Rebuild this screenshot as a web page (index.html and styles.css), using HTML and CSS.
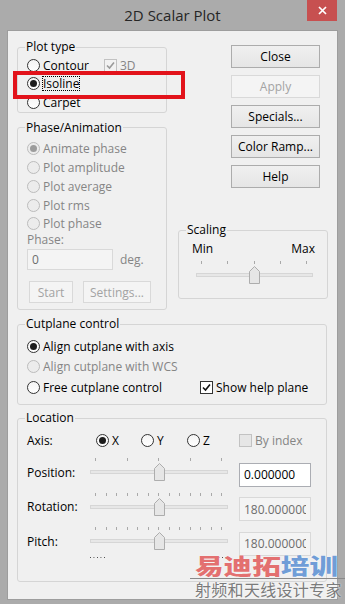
FILE: index.html
```html
<!DOCTYPE html>
<html lang="en">
  <head>
    <meta charset="UTF-8" />
    <meta name="viewport" content="width=device-width, initial-scale=1.0" />
    <title>2D Scalar Plot</title>
    <link rel="stylesheet" href="styles.css">
  </head>
  <body>
    <div class="window">
      <div class="titlebar">
        <span class="title">2D Scalar Plot</span>
        <div class="close-btn">
          <svg width="9" height="9" viewBox="0 0 9 9"><path d="M1 1L8 8M8 1L1 8" stroke="#fff" stroke-width="1.7"/></svg>
        </div>
      </div>

      <div class="client">
        <div class="top">
          <div class="left-col">
            <fieldset class="group plot-type">
              <legend>Plot type</legend>
              <div class="opt">
                <span class="radio"></span><span class="contour-label">Contour</span>
                <span class="check disabled"><svg width="9" height="9" viewBox="0 0 9 9"><path d="M1 4.5L3.5 7L8 1.5" fill="none" stroke="#9a9a9a" stroke-width="1.6"/></svg></span><span class="muted">3D</span>
              </div>
              <div class="opt"><span class="radio on"></span><span class="focus">Isoline</span></div>
              <div class="opt"><span class="radio"></span>Carpet</div>
            </fieldset>

            <fieldset class="group phase">
              <legend>Phase/Animation</legend>
              <div class="opt muted"><span class="radio on disabled"></span>Animate phase</div>
              <div class="opt muted"><span class="radio disabled"></span>Plot amplitude</div>
              <div class="opt muted"><span class="radio disabled"></span>Plot average</div>
              <div class="opt muted"><span class="radio disabled"></span>Plot rms</div>
              <div class="opt muted"><span class="radio disabled"></span>Plot phase</div>
              <div class="phase-label muted">Phase:</div>
              <div class="phase-input">
                <input class="field disabled" value="0" readonly />
                <span class="muted">deg.</span>
              </div>
              <div class="phase-buttons">
                <button class="btn disabled btn-start">Start</button>
                <button class="btn disabled btn-settings">Settings...</button>
              </div>
            </fieldset>
          </div>

          <div class="right-col">
            <button class="btn first">Close</button>
            <button class="btn disabled">Apply</button>
            <button class="btn">Specials...</button>
            <button class="btn">Color Ramp...</button>
            <button class="btn">Help</button>

            <fieldset class="group scaling">
              <legend>Scaling</legend>
              <div class="minmax"><span>Min</span><span>Max</span></div>
              <div class="slider">
                <div class="ticks"><i></i><i></i><i></i><i></i><i></i></div>
                <div class="track"></div>
                <svg class="thumb" style="left: calc((100% - 11px) * 0.5)" width="11" height="18" viewBox="0 0 11 18"><path d="M.5 17.5V5.5L5.5.5l5 5v12z" fill="#e6e6e6" stroke="#adadad"/></svg>
              </div>
            </fieldset>
          </div>
        </div>

        <fieldset class="group wide cutplane">
          <legend>Cutplane control</legend>
          <div class="opt"><span class="radio on"></span>Align cutplane with axis</div>
          <div class="opt muted"><span class="radio disabled"></span>Align cutplane with WCS</div>
          <div class="cut-row">
            <div class="opt free"><span class="radio"></span>Free cutplane control</div>
            <div class="opt">
              <span class="check"><svg width="9" height="9" viewBox="0 0 9 9"><path d="M1 4.5L3.5 7L8 1.5" fill="none" stroke="#111" stroke-width="1.6"/></svg></span>Show help plane
            </div>
          </div>
        </fieldset>

        <fieldset class="group wide location">
          <legend>Location</legend>
          <div class="axis-row">
            <span class="axis-label">Axis:</span>
            <div class="opt axis-x"><span class="radio on"></span>X</div>
            <div class="opt axis-y"><span class="radio"></span>Y</div>
            <div class="opt axis-z"><span class="radio"></span>Z</div>
            <div class="opt muted"><span class="check disabled empty"></span>By index</div>
          </div>

          <div class="slide-row">
            <span>Position:</span>
            <div class="slider">
              <div class="ticks"><i></i><i></i><i></i><i></i><i></i></div>
              <div class="track"></div>
              <svg class="thumb" style="left: calc((100% - 11px) * 0.5)" width="11" height="18" viewBox="0 0 11 18"><path d="M.5 17.5V5.5L5.5.5l5 5v12z" fill="#e6e6e6" stroke="#adadad"/></svg>
            </div>
            <input class="field" value="0.000000" readonly />
          </div>

          <div class="slide-row">
            <span>Rotation:</span>
            <div class="slider">
              <div class="ticks"><i></i><i></i><i></i><i></i><i></i><i></i><i></i><i></i><i></i><i></i><i></i><i></i><i></i></div>
              <div class="track"></div>
              <svg class="thumb" style="left: calc((100% - 11px) * 0.5)" width="11" height="18" viewBox="0 0 11 18"><path d="M.5 17.5V5.5L5.5.5l5 5v12z" fill="#e6e6e6" stroke="#adadad"/></svg>
            </div>
            <input class="field disabled" value="180.000000" readonly />
          </div>

          <div class="slide-row">
            <span>Pitch:</span>
            <div class="slider">
              <div class="ticks"><i></i><i></i><i></i><i></i><i></i><i></i><i></i><i></i><i></i><i></i><i></i><i></i><i></i></div>
              <div class="track"></div>
              <svg class="thumb" style="left: calc((100% - 11px) * 0.5)" width="11" height="18" viewBox="0 0 11 18"><path d="M.5 17.5V5.5L5.5.5l5 5v12z" fill="#e6e6e6" stroke="#adadad"/></svg>
            </div>
            <input class="field disabled" value="180.000000" readonly />
          </div>

          <div class="dots"><i class="d1"></i><i class="d2"></i></div>
        </fieldset>
      </div>

      <!-- annotation box round the Isoline option -->
      <div class="highlight"></div>

      <div class="watermark">
        <div class="wm-big"><span class="wm-red">易迪拓</span><span class="wm-blue">培训</span></div>
        <div class="wm-line"></div>
        <div class="wm-sub">射频和天线设计专家</div>
      </div>
    </div>
  </body>
</html>
```

FILE: styles.css
```css
* {
  box-sizing: border-box;
}

body {
  margin: 0;
  font-family: "Open Sans", "Noto Sans", sans-serif;
  font-size: 12px;
  color: #000;
  background-color: #ababab;
}

.window {
  position: relative;
  width: 345px;
  height: 604px;
  background-color: #ababab;
  overflow: hidden;
}

/* title bar */
.titlebar {
  display: grid;
  grid-template-columns: 1fr auto 1fr;
  height: 31px;
}

.title {
  grid-column: 2;
  font-size: 15px;
  line-height: 31px;
  color: #262626;
}

.close-btn {
  grid-column: 3;
  justify-self: end;
  margin-right: 8px;
  width: 30px;
  height: 21px;
  background-color: #c75050;
  display: flex;
  align-items: center;
  justify-content: center;
}

.client {
  margin: 0 8px;
  height: 568px;
  background-color: #f0f0f0;
  box-shadow: 0 0 0 1px #9d9d9d;
}

.top {
  display: flex;
  gap: 11px;
  padding: 9px 9px 0;
}

.left-col,
.right-col {
  width: 150px;
  display: flex;
  flex-direction: column;
}

/* group boxes */
.group {
  margin: 0;
  padding: 0 0 0 9px;
  border: 1px solid #d5d5d5;
  border-radius: 3px;
  min-width: 0;
}

.group legend {
  padding: 0 1px;
  margin-left: -2px;
  line-height: 14px;
}

.muted {
  color: #858585;
}

/* radios and checkboxes */
.opt {
  display: flex;
  align-items: center;
  gap: 3px;
  white-space: nowrap;
}

.radio {
  position: relative;
  flex: none;
  width: 13px;
  height: 13px;
  border: 1px solid #333;
  border-radius: 50%;
  background: linear-gradient(#f4f4f4, #fff);
}

.radio.on::after {
  content: "";
  position: absolute;
  inset: 2px;
  border-radius: 50%;
  background-color: #1c1c1c;
}

.radio.disabled {
  border-color: #bcbcbc;
  background: #ececec;
}

.radio.disabled.on::after {
  background-color: #9c9c9c;
}

.check {
  flex: none;
  width: 13px;
  height: 13px;
  border: 1px solid #333;
  background-color: #fff;
  display: inline-flex;
  align-items: center;
  justify-content: center;
}

.check.disabled {
  border-color: #c2c2c2;
  background-color: #f2f2f2;
}

.check.empty {
  background-color: #e6e6e6;
}

.contour-label {
  width: 58px;
}

.focus {
  outline: 1px dotted #000;
  line-height: 13px;
}

/* plot type */
.plot-type {
  padding-top: 2px;
}

.plot-type .opt {
  height: 18.5px;
}

/* phase / animation */
.phase {
  margin-top: 8px;
  padding-top: 5px;
  padding-bottom: 6px;
}

.phase .opt {
  height: 18.75px;
}

.phase-label {
  line-height: 14px;
}

.phase-input {
  display: flex;
  align-items: center;
  gap: 7px;
  margin-top: 2px;
}

.phase-input .field {
  width: 86px;
  height: 21px;
}

.phase-buttons {
  display: flex;
  gap: 10px;
  margin: 11px 0 0 2px;
}

.phase-buttons .btn {
  height: 22px;
}

.btn-start {
  width: 44px;
}

.btn-settings {
  width: 68px;
}

/* buttons */
.btn {
  font-family: inherit;
  font-size: 12px;
  color: #000;
  padding: 0;
  border: 1px solid #acacac;
  border-radius: 0;
  background: linear-gradient(#f0f0f0, #e5e5e5);
}

.btn.disabled {
  color: #a3a3a3;
  border-color: #d9d9d9;
  background: #f4f4f4;
}

.right-col .btn {
  width: 89px;
  height: 23px;
  margin: 0 0 7px 53px;
}

.right-col .btn.first {
  margin-top: 5px;
}

/* scaling */
.scaling {
  margin-top: 28px;
  padding: 5px 12px 8px 13px;
}

.scaling legend {
  margin-left: -6px;
}

.minmax {
  display: flex;
  justify-content: space-between;
  line-height: 14px;
}

.scaling .slider {
  margin: 4px 2px 0 4px;
}

/* sliders */
.slider {
  position: relative;
  height: 30px;
}

.ticks {
  display: flex;
  justify-content: space-between;
  height: 4px;
  margin: 0 6px 0 5px;
  padding-top: 1px;
}

.ticks i {
  width: 1px;
  height: 3px;
  background-color: #a9a9a9;
}

.track {
  margin-top: 9px;
  height: 4px;
  border: 1px solid #d6d6d6;
  background-color: #e7e7e7;
}

.thumb {
  position: absolute;
  top: 6px;
}

/* text fields */
.field {
  font-family: inherit;
  font-size: 12px;
  color: #000;
  padding: 0 4px;
  border: 1px solid #abadb3;
  border-radius: 0;
  background-color: #fff;
  outline: none;
  min-width: 0;
}

.field.disabled {
  color: #6d6d6d;
  border-color: #d9d9d9;
  background-color: #f4f4f4;
}

/* cutplane */
.wide {
  width: 310px;
  margin-left: 9px;
}

.cutplane {
  margin-top: 7px;
  padding-top: 4.5px;
  padding-bottom: 7px;
}

.cutplane .opt,
.cut-row {
  height: 20.5px;
}

.cut-row {
  display: flex;
  align-items: center;
}

.cut-row .free {
  width: 173px;
}

/* location */
.location {
  margin-top: 6px;
  padding-top: 5px;
  padding-bottom: 23px;
}

.axis-row {
  display: flex;
  align-items: center;
  height: 20px;
  margin-bottom: 4.5px;
}

.axis-label {
  width: 69px;
}

.axis-x {
  width: 45px;
}

.axis-y {
  width: 46px;
}

.axis-z {
  width: 52px;
}

.slide-row {
  display: grid;
  grid-template-columns: 63px 138px 83px;
  align-items: center;
  height: 34.5px;
}

.slide-row .field {
  width: 72px;
  height: 24px;
  margin: 5px 0 0 11px;
}

.dots {
  display: flex;
  height: 1px;
  margin: -1.5px 0 0 63px;
}

.dots i {
  height: 1px;
  background-image: linear-gradient(to right, #444 1px, transparent 1px);
  background-size: 3.5px 1px;
}

.dots .d1 {
  width: 17px;
}

.dots .d2 {
  width: 19px;
  margin-left: 101px;
}

/* annotation */
.highlight {
  position: absolute;
  left: 13px;
  top: 71px;
  width: 172px;
  height: 28px;
  border: 4px solid #e2131b;
}

/* watermark */
.watermark {
  position: absolute;
  left: 190px;
  top: 551px;
  width: 155px;
}

.wm-big {
  margin-left: 5px;
  font-family: "Noto Sans CJK SC", sans-serif;
  font-weight: 900;
  font-size: 22px;
  line-height: 26px;
  white-space: nowrap;
  transform: scaleX(1.3);
  transform-origin: left;
  text-shadow: 0 0 1px #fff;
}

.wm-red {
  color: rgba(222, 86, 86, 0.85);
}

.wm-blue {
  color: rgba(86, 140, 208, 0.85);
}

.wm-line {
  height: 1px;
  margin-top: 1px;
  background-color: #8a8a8a;
}

.wm-sub {
  margin-left: 5px;
  font-family: "Noto Sans CJK SC", sans-serif;
  font-size: 16px;
  line-height: 20px;
  letter-spacing: 0.3px;
  color: #7b7b7b;
  white-space: nowrap;
  text-shadow: 0 0 2px #fff;
}
```
